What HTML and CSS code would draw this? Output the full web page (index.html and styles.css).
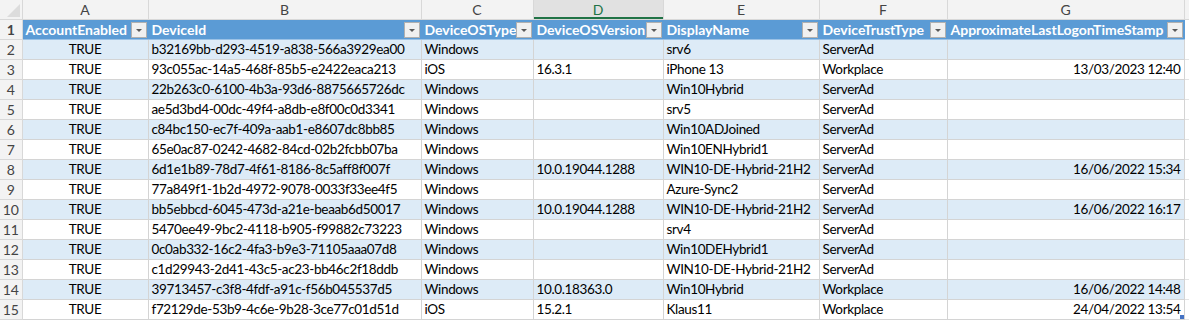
FILE: index.html
```html
<!DOCTYPE html>
<html lang="en">
<head>
  <meta charset="UTF-8">
  <title>Devices.xlsx</title>
  <link rel="stylesheet" href="styles.css">
</head>
<body>
  <table class="sheet">
    <colgroup>
      <col class="c-row">
      <col class="c-a">
      <col class="c-b">
      <col class="c-c">
      <col class="c-d">
      <col class="c-e">
      <col class="c-f">
      <col class="c-g">
      <col>
    </colgroup>
    <thead>
      <tr class="letters">
        <th class="corner"><span class="tri"></span></th>
        <th>A</th>
        <th>B</th>
        <th>C</th>
        <th class="sel">D</th>
        <th>E</th>
        <th>F</th>
        <th>G</th>
        <th class="rest"></th>
      </tr>
    </thead>
    <tbody>
      <tr class="head">
        <td class="num">1</td>
        <td><div class="hd">AccountEnabled<span class="flt"></span></div></td>
        <td><div class="hd">DeviceId<span class="flt"></span></div></td>
        <td><div class="hd">DeviceOSType<span class="flt"></span></div></td>
        <td><div class="hd">DeviceOSVersion<span class="flt"></span></div></td>
        <td><div class="hd">DisplayName<span class="flt"></span></div></td>
        <td><div class="hd">DeviceTrustType<span class="flt"></span></div></td>
        <td><div class="hd">ApproximateLastLogonTimeStamp<span class="flt"></span></div></td>
        <td class="rest"></td>
      </tr>
      <tr class="band"><td class="num">2</td><td class="mid">TRUE</td><td>b32169bb-d293-4519-a838-566a3929ea00</td><td>Windows</td><td></td><td>srv6</td><td>ServerAd</td><td class="r"></td><td class="rest"></td></tr>
      <tr><td class="num">3</td><td class="mid">TRUE</td><td>93c055ac-14a5-468f-85b5-e2422eaca213</td><td>iOS</td><td>16.3.1</td><td>iPhone 13</td><td>Workplace</td><td class="r">13/03/2023 12:40</td><td class="rest"></td></tr>
      <tr class="band"><td class="num">4</td><td class="mid">TRUE</td><td>22b263c0-6100-4b3a-93d6-8875665726dc</td><td>Windows</td><td></td><td>Win10Hybrid</td><td>ServerAd</td><td class="r"></td><td class="rest"></td></tr>
      <tr><td class="num">5</td><td class="mid">TRUE</td><td>ae5d3bd4-00dc-49f4-a8db-e8f00c0d3341</td><td>Windows</td><td></td><td>srv5</td><td>ServerAd</td><td class="r"></td><td class="rest"></td></tr>
      <tr class="band"><td class="num">6</td><td class="mid">TRUE</td><td>c84bc150-ec7f-409a-aab1-e8607dc8bb85</td><td>Windows</td><td></td><td>Win10ADJoined</td><td>ServerAd</td><td class="r"></td><td class="rest"></td></tr>
      <tr><td class="num">7</td><td class="mid">TRUE</td><td>65e0ac87-0242-4682-84cd-02b2fcbb07ba</td><td>Windows</td><td></td><td>Win10ENHybrid1</td><td>ServerAd</td><td class="r"></td><td class="rest"></td></tr>
      <tr class="band"><td class="num">8</td><td class="mid">TRUE</td><td>6d1e1b89-78d7-4f61-8186-8c5aff8f007f</td><td>Windows</td><td>10.0.19044.1288</td><td>WIN10-DE-Hybrid-21H2</td><td>ServerAd</td><td class="r">16/06/2022 15:34</td><td class="rest"></td></tr>
      <tr><td class="num">9</td><td class="mid">TRUE</td><td>77a849f1-1b2d-4972-9078-0033f33ee4f5</td><td>Windows</td><td></td><td>Azure-Sync2</td><td>ServerAd</td><td class="r"></td><td class="rest"></td></tr>
      <tr class="band"><td class="num">10</td><td class="mid">TRUE</td><td>bb5ebbcd-6045-473d-a21e-beaab6d50017</td><td>Windows</td><td>10.0.19044.1288</td><td>WIN10-DE-Hybrid-21H2</td><td>ServerAd</td><td class="r">16/06/2022 16:17</td><td class="rest"></td></tr>
      <tr><td class="num">11</td><td class="mid">TRUE</td><td>5470ee49-9bc2-4118-b905-f99882c73223</td><td>Windows</td><td></td><td>srv4</td><td>ServerAd</td><td class="r"></td><td class="rest"></td></tr>
      <tr class="band"><td class="num">12</td><td class="mid">TRUE</td><td>0c0ab332-16c2-4fa3-b9e3-71105aaa07d8</td><td>Windows</td><td></td><td>Win10DEHybrid1</td><td>ServerAd</td><td class="r"></td><td class="rest"></td></tr>
      <tr><td class="num">13</td><td class="mid">TRUE</td><td>c1d29943-2d41-43c5-ac23-bb46c2f18ddb</td><td>Windows</td><td></td><td>WIN10-DE-Hybrid-21H2</td><td>ServerAd</td><td class="r"></td><td class="rest"></td></tr>
      <tr class="band"><td class="num">14</td><td class="mid">TRUE</td><td>39713457-c3f8-4fdf-a91c-f56b045537d5</td><td>Windows</td><td>10.0.18363.0</td><td>Win10Hybrid</td><td>Workplace</td><td class="r">16/06/2022 14:48</td><td class="rest"></td></tr>
      <tr class="last"><td class="num">15</td><td class="mid">TRUE</td><td>f72129de-53b9-4c6e-9b28-3ce77c01d51d</td><td>iOS</td><td>15.2.1</td><td>Klaus11</td><td>Workplace</td><td class="r end">24/04/2022 13:54<span class="grip"></span></td><td class="rest"></td></tr>
    </tbody>
  </table>
</body>
</html>
```

FILE: styles.css
```css
body {
  margin: 0;
  background: #ffffff;
  font-family: Lato, "Liberation Sans", sans-serif;
  font-size: 14px;
  color: #000;
}

.sheet {
  border-collapse: collapse;
  table-layout: fixed;
  width: 1189px;
}
.c-row { width: 22px; }
.c-a { width: 126px; }
.c-b { width: 273px; }
.c-c { width: 112px; }
.c-d { width: 130px; }
.c-e { width: 156px; }
.c-f { width: 128px; }
.c-g { width: 237px; }

.sheet td, .sheet th {
  height: 19px;
  padding: 0 3px;
  white-space: nowrap;
  overflow: hidden;
  border: 1px solid #d4d4d4;
  border-top: none;
  line-height: 19px;
}

/* data cells: Calibri-like width */
tbody tr td {
  font-size: 13.5px;
  letter-spacing: -0.35px;
}

/* column letters */
.letters th {
  background: #f3f3f3;
  color: #444;
  font-weight: normal;
  text-align: center;
  border-color: #d8d8d8;
  border-top: none;
}
.letters th.sel {
  background: #e1e1e1;
  color: #217346;
  box-shadow: inset 0 -2px 0 #217346;
}
.letters th.corner {
  position: relative;
  border-left: none;
}
.tri {
  position: absolute;
  right: 2px;
  bottom: 2px;
  width: 0;
  height: 0;
  border-left: 13px solid transparent;
  border-bottom: 13px solid #dcdcdc;
}
.letters th.rest {
  border-right: none;
}

/* row numbers */
.sheet td.num {
  background: #f3f3f3;
  color: #444;
  text-align: center;
  padding: 0;
  font-size: 14px;
  letter-spacing: 0;
  border-color: #d8d8d8;
  border-left: none;
}

/* table header row */
.head td {
  background: #5b9bd5;
  color: #fff;
  font-weight: bold;
  font-size: 14px;
  letter-spacing: 0;
  border-color: #5b9bd5;
  border-bottom: 1px solid #9bc2e6;
}
.hd {
  display: flex;
  align-items: center;
  justify-content: space-between;
}
.flt {
  position: relative;
  flex: none;
  width: 14px;
  height: 14px;
  margin-right: -2px;
  background: #f0f0f0;
  border: 1px solid #b0b0b0;
}
.flt::after {
  content: "";
  position: absolute;
  left: 4px;
  top: 6px;
  border-left: 3px solid transparent;
  border-right: 3px solid transparent;
  border-top: 3px solid #595959;
}

/* data rows */
tbody tr td {
  border-bottom: 1px solid #9bc2e6;
}
tbody tr.band td {
  background: #ddebf7;
}
tbody tr td.num,
tbody tr.band td.num {
  background: #f3f3f3;
  border-bottom: 1px solid #d8d8d8;
}
.sheet td.rest {
  background: #fff;
  border: none;
  border-bottom: 1px solid #e4e4e4;
}
.head td.rest {
  background: #fff;
  border: none;
}
tbody tr.band td.rest {
  background: #fff;
}
.mid { text-align: center; }
.r { text-align: right; }
.sheet td.end {
  position: relative;
}
.grip {
  position: absolute;
  right: 0;
  bottom: 0;
  width: 4px;
  height: 4px;
  background: #4472c4;
}
```
